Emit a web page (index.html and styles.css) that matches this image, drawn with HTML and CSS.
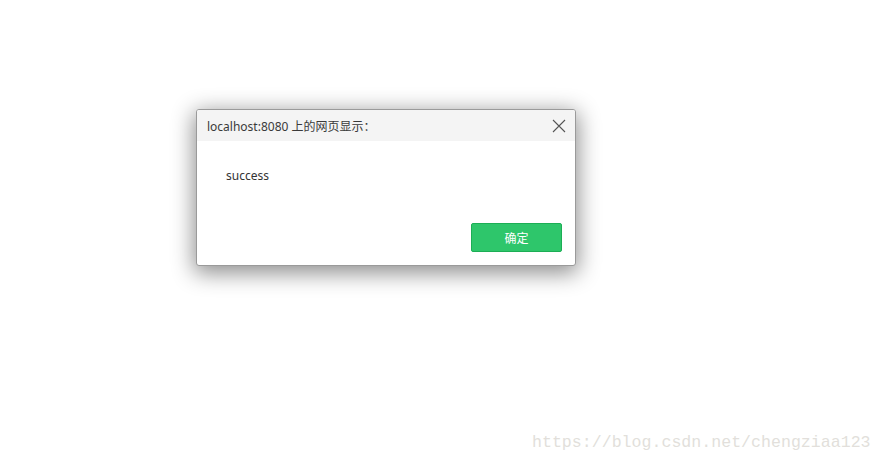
FILE: index.html
```html
<!DOCTYPE html>
<html lang="zh-CN">
<head>
<meta charset="utf-8">
<title>Alert</title>
<link rel="stylesheet" href="styles.css">
</head>
<body>
<div class="page">
  <div class="dialog">
    <div class="dialog-header">
      <span class="dialog-title">localhost:8080 上的网页显示：</span>
      <svg class="close" width="14" height="14" viewBox="0 0 14 14"><path d="M1 1 L13 13 M13 1 L1 13" stroke="#555" stroke-width="1.1" fill="none"/></svg>
    </div>
    <div class="dialog-body">success</div>
    <div class="dialog-footer">
      <button class="ok">确定</button>
    </div>
  </div>
</div>
<div class="watermark">https://blog.csdn.net/chengziaa123</div>
</body>
</html>
```
FILE: styles.css
```css
html, body {
  margin: 0;
  padding: 0;
  background: #fff;
  width: 883px;
  height: 465px;
  overflow: hidden;
}
.page {
  padding: 109px 0 0 196px;
}
.dialog {
  width: 380px;
  height: 157px;
  box-sizing: border-box;
  border: 1px solid #9a9a9a;
  border-radius: 3px;
  background: #fff;
  box-shadow: 0 5px 22px 2px rgba(0,0,0,0.45);
  display: flex;
  flex-direction: column;
  overflow: hidden;
  font-family: "Noto Sans", "Noto Sans CJK SC", sans-serif;
}
.dialog-header {
  height: 31px;
  background: #f4f4f4;
  display: flex;
  align-items: center;
  justify-content: space-between;
  padding: 0 9px 0 10px;
}
.dialog-title {
  font-size: 12px;
  color: #3a3a3a;
}
.close {
  display: block;
}
.dialog-body {
  padding: 26px 0 0 29px;
  font-size: 12px;
  color: #333;
  height: 56px;
}
.dialog-footer {
  display: flex;
  justify-content: flex-end;
  padding: 0 13px 0 0;
}
.ok {
  width: 91px;
  height: 29px;
  box-sizing: border-box;
  background: #2ec66b;
  border: 1px solid #1cae55;
  border-radius: 2px;
  color: #fff;
  font-size: 12px;
  font-family: "Noto Sans CJK SC", sans-serif;
  padding: 0;
}
.watermark {
  position: absolute;
  left: 532px;
  top: 433px;
  font-family: "Liberation Mono", monospace;
  font-size: 16.6px;
  color: #e2dfdb;
  white-space: nowrap;
}
```
